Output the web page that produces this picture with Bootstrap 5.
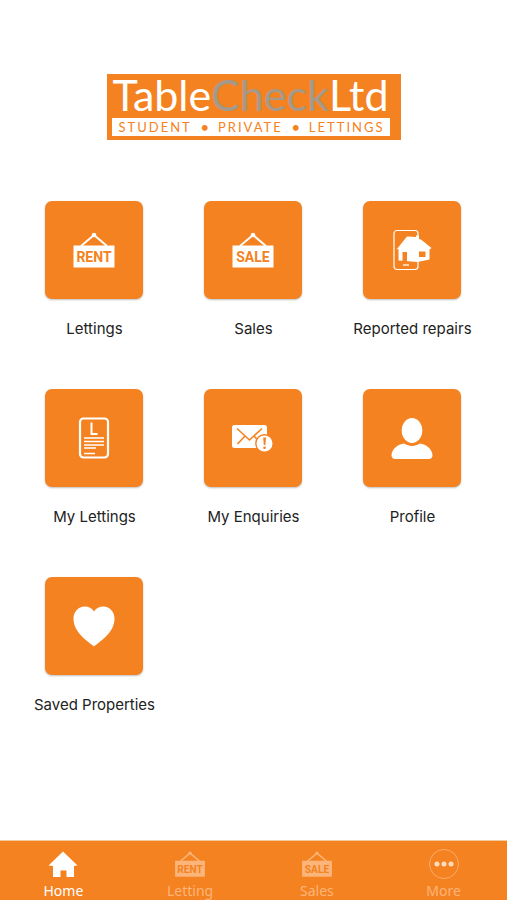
<!DOCTYPE html>
<html lang="en">
<head>
<meta charset="utf-8">
<meta name="viewport" content="width=device-width, initial-scale=1">
<title>TableCheckLtd</title>
<link href="https://cdn.jsdelivr.net/npm/bootstrap@5.3.0/dist/css/bootstrap.min.css" rel="stylesheet">
<style>
:root { --brand: #f58220; }
body { font-family: Inter, "Open Sans", sans-serif; color: #222; }
.launcher { padding: 74px 15px 32px; }
.brand-logo { background: var(--brand); width: 294px; padding: 3px 11px 4px 5px; margin-bottom: 61px; font-family: Lato, sans-serif; }
.brand-name { color: #fff; font-size: 43px; line-height: 36px; font-weight: 400; margin-bottom: 5px; }
.brand-name span { color: #a39a8c; }
.brand-tag { background: #fff; color: var(--brand); font-size: 13px; line-height: 18px; padding: 0 5px 0 7px; }
.brand-tag span { letter-spacing: 2px; }
.tiles { row-gap: 48px; }
.tile-link { color: #222; font-size: 15px; line-height: 24px; }
.tile-box { width: 98px; height: 98px; border-radius: 7px; background: var(--brand); color: #fff; box-shadow: 0 1px 2px rgba(0,0,0,.25); margin-bottom: 18px; }
.tile-box svg { width: 44px; height: 44px; }
.sign-text { font: 700 14px Roboto, sans-serif; fill: var(--brand); text-anchor: middle; }
.tabs { background: var(--brand); border-top: 1px solid #f3c9a0; height: 60px; font-family: "Noto Sans", "Open Sans", sans-serif; font-size: 14px; line-height: 18px; }
.tabs .nav-link { color: #fbb57a; padding: 7px 0 0; }
.tabs .nav-link.active { color: #fff; }
.tabs svg { width: 32px; height: 32px; margin-bottom: 2px; }
</style>
<script src="https://cdn.jsdelivr.net/npm/bootstrap@5.3.0/dist/js/bootstrap.bundle.min.js"></script>
</head>
<body class="d-flex flex-column min-vh-100 bg-white">
<svg class="d-none" aria-hidden="true">
  <symbol id="sign" viewBox="0 0 44 44">
    <path d="M9 18 22 7 35 18" fill="none" stroke="currentColor" stroke-width="2"/>
    <circle cx="22" cy="7" r="2.300" fill="currentColor"/>
    <path d="M1.500 17.500h41v22h-41z" fill="currentColor"/>
  </symbol>
</svg>
<main class="launcher flex-grow-1">
  <h1 class="brand-logo mx-auto mt-0">
    <span class="brand-name d-block text-center text-nowrap">Table<span>Check</span>Ltd</span>
    <span class="brand-tag d-flex justify-content-between fw-normal"><span>STUDENT</span><b>•</b><span>PRIVATE</span><b>•</b><span>LETTINGS</span></span>
  </h1>
  <div class="tiles row gx-0 text-center">
    <div class="col-4"><a href="#lettings" class="tile-link d-flex flex-column align-items-center text-decoration-none text-nowrap">
      <span class="tile-box d-flex align-items-center justify-content-center"><svg viewBox="0 0 44 44"><use href="#sign"/><text class="sign-text" x="22" y="34">RENT</text></svg></span>Lettings</a></div>
    <div class="col-4"><a href="#sales" class="tile-link d-flex flex-column align-items-center text-decoration-none text-nowrap">
      <span class="tile-box d-flex align-items-center justify-content-center"><svg viewBox="0 0 44 44"><use href="#sign"/><text class="sign-text" x="22" y="34">SALE</text></svg></span>Sales</a></div>
    <div class="col-4"><a href="#repairs" class="tile-link d-flex flex-column align-items-center text-decoration-none text-nowrap">
      <span class="tile-box d-flex align-items-center justify-content-center"><svg viewBox="0 0 44 44">
        <rect x="4" y="2.500" width="24" height="39" rx="3" fill="none" stroke="#fff" stroke-width="1.200"/>
        <path d="M13 37h6" stroke="#fff" stroke-width="1.300"/>
        <path d="M6.500 21.500 17 8.500 26 9V7.500h3V11l2 .5 10.500 8.500-2 1.500V31.500l-12 2.500L8.500 32.500V21z" fill="#fff"/>
        <path d="M12.500 24h4.500v10h-4.500zM29 23.500h6.500V29H29z" fill="#f58220"/>
      </svg></span>Reported repairs</a></div>
    <div class="col-4"><a href="#my-lettings" class="tile-link d-flex flex-column align-items-center text-decoration-none text-nowrap">
      <span class="tile-box d-flex align-items-center justify-content-center"><svg viewBox="0 0 44 44" fill="none" stroke="#fff">
        <rect x="8" y="2.500" width="28" height="39" rx="3.500" stroke-width="2.200"/>
        <path d="M19.500 6.500v11.500h6" stroke-width="2"/>
        <path d="M12 22h20M12 25.500h20M12 29h20M12 32h12M12 37.500h11" stroke-width="1.600"/>
      </svg></span>My Lettings</a></div>
    <div class="col-4"><a href="#enquiries" class="tile-link d-flex flex-column align-items-center text-decoration-none text-nowrap">
      <span class="tile-box d-flex align-items-center justify-content-center"><svg viewBox="0 0 44 44">
        <rect x="1" y="9" width="35" height="23" rx="2.500" fill="#fff"/>
        <path d="M6 12.500 18.500 24 31 12.500M6.500 28 14 20M30.500 28 23 20" fill="none" stroke="#f58220" stroke-width="1.600"/>
        <circle cx="33.500" cy="27.500" r="8.700" fill="#fff" stroke="#f58220" stroke-width="1.400"/>
        <path d="M32.200 21.500h2.800l-.6 7.500h-1.600z" fill="#f58220"/><circle cx="33.600" cy="31.700" r="1.300" fill="#f58220"/>
      </svg></span>My Enquiries</a></div>
    <div class="col-4"><a href="#profile" class="tile-link d-flex flex-column align-items-center text-decoration-none text-nowrap">
      <span class="tile-box d-flex align-items-center justify-content-center"><svg viewBox="0 0 44 44" fill="#fff">
        <ellipse cx="22" cy="14.500" rx="10.300" ry="12.500"/>
        <path d="M14 27.500c5 3.300 11 3.300 16 0 6 .5 12 5.500 12.500 11.500.1 2.500-1.500 4-4 4H5.500c-2.500 0-4.100-1.500-4-4C2 33 8 28 14 27.500z"/>
      </svg></span>Profile</a></div>
    <div class="col-4"><a href="#saved" class="tile-link d-flex flex-column align-items-center text-decoration-none text-nowrap">
      <span class="tile-box d-flex align-items-center justify-content-center"><svg viewBox="0 0 44 44" fill="#fff">
        <path d="M22 42.500C15 36.500 1.500 28.500 1.500 14.500 1.500 7.500 6.500 2.500 12.500 2.500c4 0 7.500 1.800 9.500 5 2-3.200 5.500-5 9.500-5 6 0 11 5 11 12C42.500 28.500 29 36.500 22 42.500z"/>
      </svg></span>Saved Properties</a></div>
  </div>
</main>
<nav class="tabs nav nav-justified flex-nowrap" aria-label="Main">
  <div class="nav-item"><a class="nav-link active d-flex flex-column align-items-center" aria-current="page" href="#home"><svg viewBox="0 0 32 32" fill="currentColor"><path d="M16 3.500 30.500 17.500 27 18v11h-7.500v-6.500h-6V29H6V18l-4.500-.5z"/></svg>Home</a></div>
  <div class="nav-item"><a class="nav-link d-flex flex-column align-items-center" href="#letting"><svg viewBox="0 0 44 44"><use href="#sign"/><text class="sign-text" x="22" y="34">RENT</text></svg>Letting</a></div>
  <div class="nav-item"><a class="nav-link d-flex flex-column align-items-center" href="#sales-tab"><svg viewBox="0 0 44 44"><use href="#sign"/><text class="sign-text" x="22" y="34">SALE</text></svg>Sales</a></div>
  <div class="nav-item"><a class="nav-link d-flex flex-column align-items-center" href="#more"><svg viewBox="0 0 32 32" fill="currentColor"><circle cx="16" cy="16" r="14.500" fill="none" stroke="currentColor" stroke-width=".8"/><g fill="#fddcc0"><circle cx="9" cy="16" r="2.500"/><circle cx="16" cy="16" r="2.500"/><circle cx="23" cy="16" r="2.500"/></g></svg>More</a></div>
</nav>
</body>
</html>
